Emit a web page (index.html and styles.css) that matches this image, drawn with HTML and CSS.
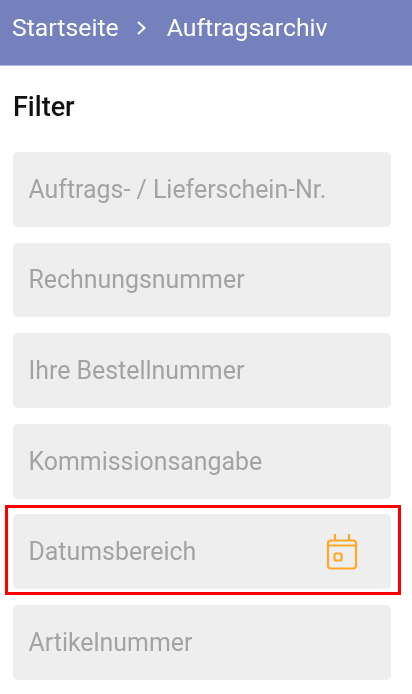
FILE: index.html
```html
<html>
  <head>
    <meta charset="utf-8">
    <link rel="stylesheet" href="styles.css">
  </head>
  <body>
    <div class="topbar">
      <span class="crumb">Startseite</span>
      <svg class="crumb-arrow" width="16" height="16" viewBox="0 0 16 16">
        <path d="M3 2l6.5 6L3 14" fill="none" stroke="#fff" stroke-width="2"/>
      </svg>
      <span class="crumb">Auftragsarchiv</span>
    </div>
    <div class="content">
      <h1 class="title">Filter</h1>
      <div class="filters">
        <div class="field">Auftrags- / Lieferschein-Nr.</div>
        <div class="field">Rechnungsnummer</div>
        <div class="field">Ihre Bestellnummer</div>
        <div class="field">Kommissionsangabe</div>
        <div class="field field-marked">
          Datumsbereich
          <svg class="cal-icon" width="32" height="36" viewBox="0 0 32 36">
            <rect x="2" y="6.5" width="28" height="28" rx="3" fill="none" stroke="#ffa726" stroke-width="2.2"/>
            <path d="M2 11.5h28M9 0v6M23 0v6" fill="none" stroke="#ffa726" stroke-width="2.2"/>
            <rect x="8.5" y="19.5" width="7" height="7" rx="1" fill="none" stroke="#ffa726" stroke-width="2.2"/>
          </svg>
        </div>
        <div class="field">Artikelnummer</div>
      </div>
    </div>
  </body>
</html>
```

FILE: styles.css
```css
html, body {
  margin: 0;
  padding: 0;
  background: #fff;
  overflow: hidden;
}

body {
  font-family: Roboto, "Noto Sans", sans-serif;
  filter: blur(0.4px);
}

.topbar {
  display: flex;
  align-items: center;
  gap: 16px;
  height: 66px;
  padding: 0 12px 10px;
  box-sizing: border-box;
  background: #7581bd;
  border-bottom: 1px solid #b4bbdc;
  color: #fff;
  font-size: 24.8px;
}

.crumb-arrow {
  flex: none;
}

.content {
  padding: 0 21px 0 13px;
}

.title {
  margin: 24px 0 28px;
  font-size: 27px;
  line-height: 34px;
  font-weight: 500;
  color: #111;
}

.filters {
  display: flex;
  flex-direction: column;
  gap: 15.8px;
}

.field {
  position: relative;
  display: flex;
  align-items: center;
  justify-content: space-between;
  height: 74.8px;
  padding: 0 33px 0 15.5px;
  box-sizing: border-box;
  background: #eee;
  border-radius: 5px;
  color: #a3a3a3;
  font-size: 24.9px;
}

/* red box drawn round the date field */
.field-marked::after {
  content: "";
  position: absolute;
  top: -9.5px;
  right: -10px;
  bottom: -6px;
  left: -8.5px;
  border: 3px solid #f00;
}
```
